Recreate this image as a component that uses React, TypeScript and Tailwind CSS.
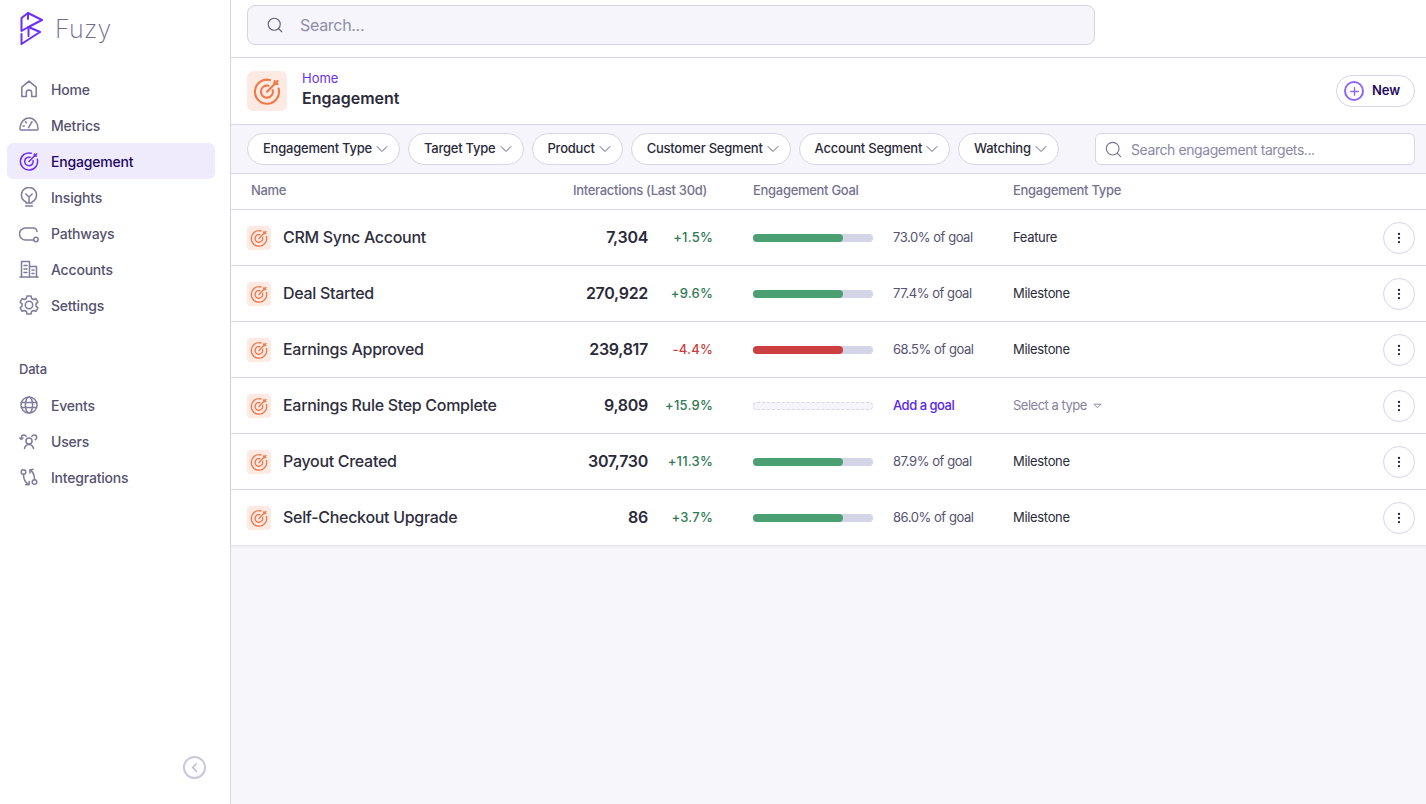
import { ChevronDown, MoreVertical, Search, Plus, ChevronLeft } from 'lucide-react'
import type { ReactNode } from 'react'

const Icon = ({ children, className = '' }: { children: ReactNode; className?: string }) => (
  <svg viewBox="0 0 20 20" fill="none" stroke="currentColor" strokeWidth="1.5" strokeLinecap="round" strokeLinejoin="round" className={className}>
    {children}
  </svg>
)

const TargetIcon = ({ className = '' }: { className?: string }) => (
  <svg viewBox="0 0 20 20" fill="none" stroke="currentColor" strokeWidth="1.5" strokeLinecap="round" strokeLinejoin="round" className={className}>
    <path d="M18.3 8.3A8.6 8.6 0 1 1 12.2 2.200" />
    <path d="M14.100 9.400A4.300 4.300 0 1 1 11 6.300" />
    <path d="M10 10.500 17.600 2.800" />
    <path d="M15.400 2.900V5h2.200" />
  </svg>
)

const nav = [
  { label: 'Home', icon: <path d="M2.800 17.600V8.200L10 2.200l7.200 6v9.400h-4.500v-4a2.700 2.700 0 0 0-5.400 0v4H2.800Z" /> },
  {
    label: 'Metrics',
    icon: (
      <>
        <path d="M2 15h16c.8 0 1.100-.5 1.100-1.200 0-6-4-10.800-9.100-10.800S.9 7.800.9 13.800c0 .7.3 1.200 1.100 1.200Z" />
        <path d="M9.600 12.700 13 6.700" />
        <path d="M4 11h1.200M6.500 6.800l.8.9" />
      </>
    ),
  },
  { label: 'Engagement', active: true },
  {
    label: 'Insights',
    icon: (
      <>
        <path d="M7 16v-1c0-.5-.7-.8-2-1.270a7.600 7.600 0 1 1 10 0c-1.300.47-2 .77-2 1.270v1H7Z" />
        <path d="M6.600 18.900h6.800" />
        <path d="M6.800 7 10 10l3.200-3M10 10v6" />
      </>
    ),
  },
  {
    label: 'Pathways',
    icon: (
      <>
        <path d="M18 8.500a3.500 3.500 0 0 0-3.500-3.500H6.500a6 6 0 0 0 0 12h8" />
        <circle cx="17" cy="16.500" r="2.200" />
      </>
    ),
  },
  {
    label: 'Accounts',
    icon: (
      <>
        <path d="M1 18h18" />
        <path d="M2.500 18V2.500h8V18" />
        <path d="M10.500 7.500h7V18" />
        <path d="M5 6.500h3M5 10h3M5 13.500h3M13 11h2M13 14.500h2" />
      </>
    ),
  },
  {
    label: 'Settings',
    icon: (
      <>
        <path d="M8 1h4l.6 2.500 1.800 1 2.500-.8 2 3.400-1.900 1.800v2.200l1.900 1.800-2 3.400-2.500-.8-1.800 1L12 19H8l-.6-2.500-1.800-1-2.500.8-2-3.400 1.900-1.800V8.900L1.100 7.100l2-3.400 2.500.8 1.800-1L8 1Z" />
        <circle cx="10" cy="10" r="3.700" />
      </>
    ),
  },
]

const dataNav = [
  {
    label: 'Events',
    icon: (
      <>
        <circle cx="10" cy="10" r="8" />
        <ellipse cx="10" cy="10" rx="3.600" ry="8" />
        <path d="M2.400 7.400h15.200M2.400 12.600h15.200" />
      </>
    ),
  },
  {
    label: 'Users',
    icon: (
      <>
        <circle cx="10" cy="10" r="3" />
        <path d="M5.500 17.500c.6-2.500 2.400-4 4.500-4s3.900 1.500 4.500 4" />
        <path d="M.8 7 2.400 8.400 4 7" />
        <path d="M2.400 8.200V6.600c0-1.500 1-2.600 2.400-2.600 1 0 1.900.5 2.400 1.400" />
        <path d="M12.800 5.400c.5-.9 1.400-1.400 2.400-1.400a2.500 2.500 0 0 1 2.500 2.500c0 1-.6 1.800-1.500 2.200" />
      </>
    ),
  },
  {
    label: 'Integrations',
    icon: (
      <>
        <circle cx="4.500" cy="5" r="2.300" />
        <circle cx="15.500" cy="15" r="2.300" />
        <path d="M4.500 7.300c0 4.500 1 8.200 5.300 10.200" />
        <path d="M15.500 12.700c0-4.500-.7-7.500-4.300-9.700" />
        <path d="M6.700 17.700l3.300-.1.300-3" />
        <path d="M14 2.300l-3.100.6.100 3.100" />
      </>
    ),
  },
]

const rows = [
  { name: 'CRM Sync Account', count: '7,304', delta: '+1.5%', goal: '73.0% of goal', type: 'Feature' },
  { name: 'Deal Started', count: '270,922', delta: '+9.6%', goal: '77.4% of goal', type: 'Milestone' },
  { name: 'Earnings Approved', count: '239,817', delta: '-4.4%', goal: '68.5% of goal', type: 'Milestone', bad: true },
  { name: 'Earnings Rule Step Complete', count: '9,809', delta: '+15.9%', empty: true },
  { name: 'Payout Created', count: '307,730', delta: '+11.3%', goal: '87.9% of goal', type: 'Milestone' },
  { name: 'Self-Checkout Upgrade', count: '86', delta: '+3.7%', goal: '86.0% of goal', type: 'Milestone' },
]

const filters = ['Engagement Type', 'Target Type', 'Product', 'Customer Segment', 'Account Segment', 'Watching']

function NavItem({ label, icon, active }: { label: string; icon?: ReactNode; active?: boolean }) {
  return (
    <div className={`flex h-9 items-center gap-3 rounded-md pl-3 text-[14px] font-medium tracking-[-0.2px] ${active ? 'bg-[#efebfd] text-[#23085f]' : 'text-[#55526f]'}`}>
      {active ? <TargetIcon className="h-5 w-5 text-[#6b2ff5]" /> : <Icon className="h-5 w-5 text-[#7f7c9e]">{icon}</Icon>}
      <span>{label}</span>
    </div>
  )
}

export default function App() {
  return (
    <div className="flex h-[804px] w-[1426px] overflow-hidden bg-[#f6f6fb] font-['Inter',sans-serif] text-[#2b2a3a]">
      <aside className="flex w-[231px] shrink-0 flex-col border-r border-[#d6d6e8] bg-white">
        <div className="flex h-[71px] shrink-0 items-center gap-[11px] pb-[14px] pl-[20px]">
          <svg viewBox="21 11 24 33" className="h-[33px] w-6" fill="none" stroke="#6b2ff5" strokeWidth="2" strokeLinejoin="round" strokeLinecap="round">
            <path d="M29 12 43 19 29.500 26 41 31 22.500 43V33" />
            <path d="M29 12 22.500 17V30L29.500 26" />
            <path d="M29 12V18M29.500 26V35" />
          </svg>
          <span className="pt-[2px] text-[25px] font-extralight leading-none tracking-[0.01em] text-[#6f6c90]">Fuzy</span>
        </div>
        <nav className="ml-[7px] flex w-[208px] flex-col">
          {nav.map((item) => (
            <NavItem key={item.label} {...item} />
          ))}
        </nav>
        <div className="mt-[37px] pl-[19px] text-[13px] font-medium leading-[18px] tracking-[-0.2px] text-[#55526f]">Data</div>
        <nav className="ml-[7px] mt-[9px] flex w-[208px] flex-col">
          {dataNav.map((item) => (
            <NavItem key={item.label} {...item} />
          ))}
        </nav>
        <div className="mt-auto flex justify-end pb-[25px] pr-6">
          <div className="flex h-[23px] w-[23px] items-center justify-center rounded-full border-2 border-[#c9c8dc] text-[#b5b4cd]">
            <ChevronLeft size={15} strokeWidth={2} />
          </div>
        </div>
      </aside>

      <main className="flex min-w-0 flex-1 flex-col">
        <div className="flex h-[58px] shrink-0 items-start border-b border-[#d6d6e8] bg-white px-4 pt-[5px]">
          <div className="flex h-10 w-[848px] items-center gap-4 rounded-lg border border-[#d3d3e6] bg-[#f5f5fb] pl-[18px]">
            <Search size={18} strokeWidth={1.5} className="text-[#65627f]" />
            <span className="text-[16px] tracking-[-0.3px] text-[#8f8da8]">Search...</span>
          </div>
        </div>

        <div className="flex h-[67px] shrink-0 items-center justify-between border-b border-[#d3d3e9] bg-white pl-4 pr-[11px]">
          <div className="flex items-center gap-[15px]">
            <div className="flex h-10 w-10 items-center justify-center rounded-md bg-[#fdeae3]">
              <TargetIcon className="h-7 w-7 text-[#f0794a]" />
            </div>
            <div className="pb-1">
              <div className="text-[13px] leading-[18px] text-[#6b2ff5]">Home</div>
              <div className="text-[16px] font-semibold leading-[22px] text-[#2b2a3a]">Engagement</div>
            </div>
          </div>
          <div className="flex h-8 w-[79px] items-center gap-2 rounded-full border border-[#d6d6e8] pl-[7px] text-[13px] font-semibold tracking-[-0.1px] text-[#23085f]">
            <div className="flex h-5 w-5 items-center justify-center rounded-full border-2 border-[#8f66f7] text-[#8f66f7]">
              <Plus size={13} strokeWidth={2.5} />
            </div>
            New
          </div>
        </div>

        <div className="flex h-[49px] shrink-0 items-center gap-2 border-b border-[#d6d6e8] bg-[#f5f5fb] pl-4 pr-[11px]">
          {filters.map((f) => (
            <div key={f} className="flex h-8 items-center whitespace-nowrap rounded-full border border-[#d6d6e8] bg-white pl-[15px] pr-[7px] text-[13px] font-medium tracking-[-0.235px] text-[#2b2a3a]">
              {f}
              <ChevronDown size={20} strokeWidth={1.2} className="text-[#65627f]" />
            </div>
          ))}
          <div className="ml-auto flex h-8 w-[320px] items-center gap-2 rounded-md border border-[#d6d6e8] bg-white pl-[8px]">
            <Search size={19} strokeWidth={1.4} className="text-[#75728f]" />
            <span className="text-[14px] tracking-[-0.42px] text-[#8a88a6]">Search engagement targets...</span>
          </div>
        </div>

        <div className="flex h-9 shrink-0 items-center border-b border-[#d6d6e8] bg-white pb-px pl-5 text-[13px] font-medium tracking-[-0.3px] text-[#75728f]">
          <span className="w-[322px]">Name</span>
          <span className="w-[180px]">Interactions (Last 30d)</span>
          <span className="w-[260px]">Engagement Goal</span>
          <span>Engagement Type</span>
        </div>

        <div className="shadow-[0_1px_2px_rgba(40,40,80,0.08)]">
          {rows.map((r) => (
            <div key={r.name} className="flex h-14 items-center border-b border-[#d6d6e8] bg-white pl-4 pr-[11px] last:border-[#e6e6f0]">
              <div className="flex h-6 w-6 shrink-0 items-center justify-center rounded bg-[#fdeae3]">
                <TargetIcon className="h-[18px] w-[18px] text-[#f0794a]" />
              </div>
              <span className="ml-3 w-[275px] pb-px text-[16px] font-medium tracking-[-0.3px] text-[#2f2e3e]">{r.name}</span>
              <span className="w-[90px] pb-px text-right text-[16px] font-semibold tracking-[-0.3px] text-[#2b2a3a]">{r.count}</span>
              <span className={`w-[65px] text-right text-[13px] font-medium tracking-[0.2px] ${r.bad ? 'text-[#cb3f41]' : 'text-[#2f7a55]'}`}>{r.delta}</span>
              <div className="ml-10 w-[120px]">
                {r.empty ? (
                  <div className="h-2 rounded-full border border-dashed border-[#d6d6e8] bg-[#f5f5fb]" />
                ) : (
                  <div className="h-2 rounded-full bg-[#d3d4e6]">
                    <div className={`h-2 w-[90px] rounded-full ${r.bad ? 'bg-[#cb3f41]' : 'bg-[#4aa070]'}`} />
                  </div>
                )}
              </div>
              <span className={`ml-5 w-[120px] text-[13px] ${r.empty ? 'font-medium tracking-[-0.5px] text-[#5b1ff0]' : 'tracking-[-0.45px] text-[#55526f]'}`}>
                {r.empty ? 'Add a goal' : r.goal}
              </span>
              {r.empty ? (
                <span className="flex items-center gap-[6px] text-[13px] tracking-[-0.5px] text-[#85829f]">
                  Select a type
                  <svg viewBox="0 0 10 6" className="h-[6px] w-[9px]" fill="none" stroke="#85829f"><path d="M1 1h8L5 5Z" /></svg>
                </span>
              ) : (
                <span className="text-[13px] tracking-[-0.33px] text-[#2b2a3a]">{r.type}</span>
              )}
              <div className="ml-auto flex h-8 w-8 items-center justify-center rounded-full border border-[#d6d6e8]">
                <MoreVertical size={14} strokeWidth={2} className="text-[#2b2a3a]" />
              </div>
            </div>
          ))}
        </div>
      </main>
    </div>
  )
}
